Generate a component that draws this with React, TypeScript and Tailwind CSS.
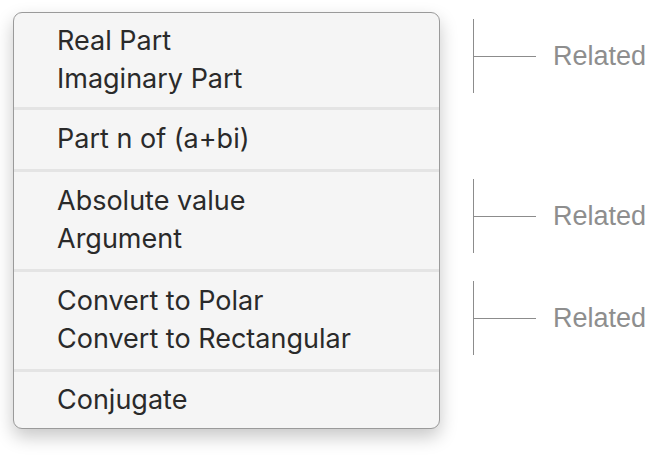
import React from 'react';

const sections: { items: string[]; pad: string }[] = [
  { items: ['Real Part', 'Imaginary Part'], pad: 'pt-[9px] pb-[9px]' },
  { items: ['Part n of (a+bi)'], pad: 'pt-[10px] pb-[11px]' },
  { items: ['Absolute value', 'Argument'], pad: 'pt-[10px] pb-[11px]' },
  { items: ['Convert to Polar', 'Convert to Rectangular'], pad: 'pt-[10px] pb-[11px]' },
  { items: ['Conjugate'], pad: 'pt-[9px] pb-[9px]' },
];

const Bracket: React.FC<{ className?: string }> = ({ className }) => (
  <div className={`flex h-[74px] items-center border-l border-[#8c8c8c] ${className ?? ''}`}>
    <div className="h-px w-[62px] bg-[#8c8c8c]" />
    <span className="ml-[17px] text-[27px] text-[#8e8e8e]" style={{ fontFamily: '"Liberation Sans", Arial, sans-serif' }}>
      Related
    </span>
  </div>
);

const App: React.FC = () => {
  return (
    <div className="flex h-[460px] w-[660px] bg-white" style={{ fontFamily: 'Inter, "Noto Sans", sans-serif' }}>
      <div className="ml-[13px] mt-[12px] h-fit w-[427px] overflow-hidden rounded-[9px] border border-[#9a9a9a] bg-[#f5f5f5] shadow-[0_8px_18px_rgba(0,0,0,0.22)]">
        {sections.map((s, i) => (
          <div key={i} className={`${s.pad} ${i > 0 ? 'border-t-[3px] border-[#e4e4e4]' : ''}`}>
            {s.items.map((label) => (
              <div key={label} className="flex h-[38px] items-center pl-[43px] text-[27px] text-[#2a2a2a]">
                {label}
              </div>
            ))}
          </div>
        ))}
      </div>

      <div className="ml-[33px] flex flex-col">
        <Bracket className="mt-[19px]" />
        <Bracket className="mt-[86px]" />
        <Bracket className="mt-[28px]" />
      </div>
    </div>
  );
};

export default App;
